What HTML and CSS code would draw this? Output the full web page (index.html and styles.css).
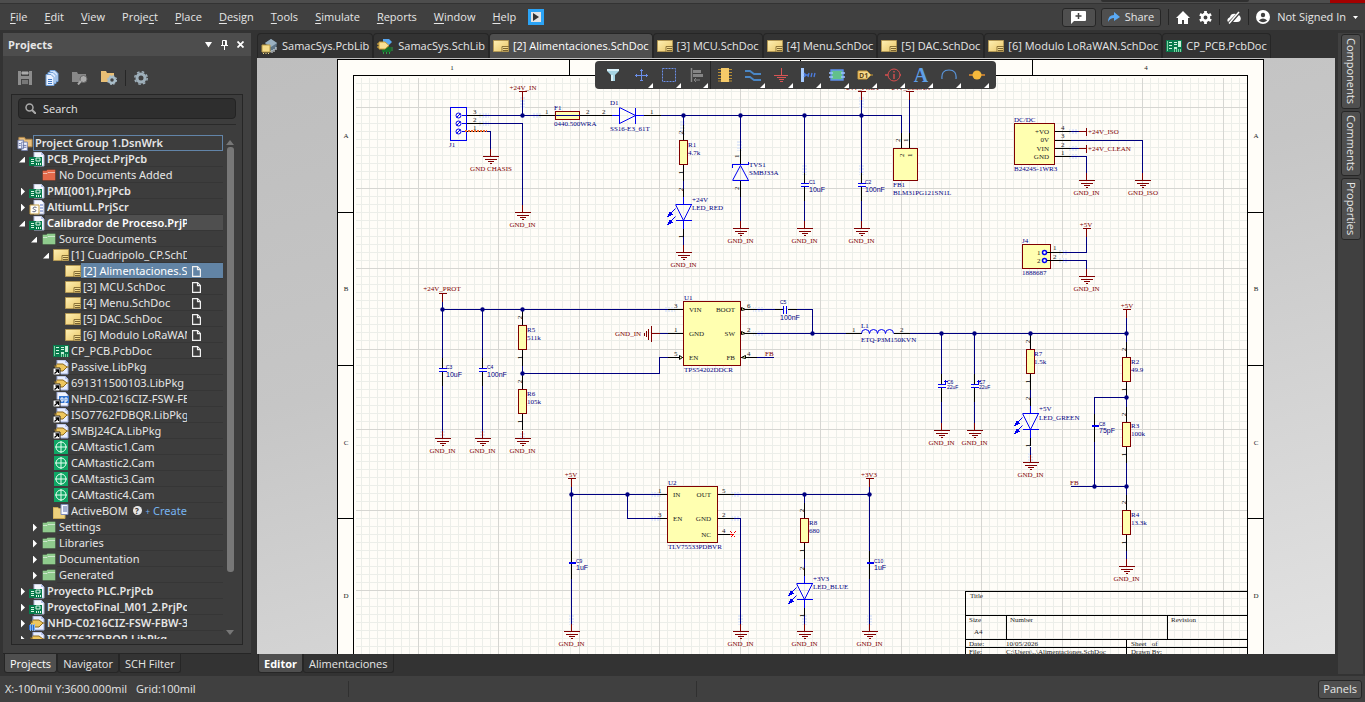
FILE: index.html
```html
<!DOCTYPE html>
<html lang="en">
<head>
<meta charset="utf-8">
<title>[2] Alimentaciones.SchDoc</title>
<link rel="stylesheet" href="styles.css">
</head>
<body>
<svg class="defs" aria-hidden="true">
  <defs>
    <linearGradient id="gold" x1="0" y1="0" x2="1" y2="1"><stop offset="0" stop-color="#fff0b4"/><stop offset="1" stop-color="#e8c566"/></linearGradient>
    <symbol id="i-sch" viewBox="0 0 16 12"><path d="M.5.5h15v11H.5z" fill="url(#gold)" stroke="#b39855"/><path d="M9 12V6.500h7" fill="#f3dc92" stroke="#8d7438"/><path d="M10 8.500h5M10 10.500h5" stroke="#7a6430"/></symbol>
    <symbol id="i-pcb" viewBox="0 0 16 12"><path d="M0 0h16v12H0z" fill="#0a7a4c"/><path d="M3 2.500h3M3 5.500h3M3 8.500h3M8 2.500h3M8 4.500h3" stroke="#d9f5e4"/><path d="M12 1h3v6h-3zM8 7h3v2H8z" fill="#c9efd8"/><path d="M1.500 1v10M8.500 9v3M10.500 9v3M12.500 9v3M14.500 9v3" stroke="#7ed0a2"/></symbol>
    <symbol id="i-prj" viewBox="0 0 16 15"><path d="M5 0h7l3 3v11H5z" fill="#f6f8ff" stroke="#aab4d4"/><path d="M12 0v3h3" fill="#b7c4ea"/><path d="M0 5h13v9H0z" fill="#067a4b"/><path d="M2 7.500h3M2 9.500h3M2 11.500h3M7.500 11v2M9.500 11v2M11.500 11v2" stroke="#d9f5e4"/><path d="M7 6h4v3H7z" fill="none" stroke="#d9f5e4"/></symbol>
    <symbol id="i-group" viewBox="0 0 17 15"><path d="M2 1h6l1 2h7v8H2z" fill="#e9c07c" stroke="#b5894a"/><path d="M1 4h6v9H1zM5 6h6v9H5z" fill="#f1f4ff" stroke="#7480ab"/><path d="M6 9.500h4M6 11.500h4M2 7.500h2M2 9.500h2" stroke="#6573a8"/></symbol>
    <symbol id="i-folder" viewBox="0 0 14 12"><path d="M.5 11.500V1.500h4l1-1h8v11z" fill="currentColor" stroke="#0003"/><path d="M1 4.500h4l1-1h7" fill="none" stroke="#fff8"/></symbol>
    <symbol id="i-scr" viewBox="0 0 16 15"><path d="M5 0h7l3 3v11H5z" fill="#f6f8ff" stroke="#aab4d4"/><path d="M11 5h3M11 8h3M11 11h3" stroke="#5c78c4"/><path d="M1 5h9v9H1z" fill="#fffdf4" stroke="#c39d45"/><path d="M7.500 7.500C4 6 3 9 5.500 9.500s1.500 3-2 2" fill="none" stroke="#5d6480"/></symbol>
    <symbol id="i-lib" viewBox="0 0 16 15"><path d="M4 0h8l3 3v11H4z" fill="#e7edff" stroke="#9aa9d6"/><path d="M12 0v3h3" fill="#b7c4ea"/><path d="M4 4h6l4 3-4 4H4V9H1M4 6H1M14 7h2" fill="#efc75e" stroke="#8d6a1e"/></symbol>
    <symbol id="i-liblink" viewBox="0 0 16 15"><use href="#i-lib" width="16" height="15"/><path d="M0 8h7v7H0z" fill="#fff" stroke="#222"/><path d="M1.500 13.500l3.500-3M2.500 10h3v3" fill="none" stroke="#000" stroke-width="1.300"/></symbol>
    <symbol id="i-libblue" viewBox="0 0 16 15"><use href="#i-lib" width="16" height="15"/><path d="M0 9h6v5H0z" fill="#2c6ccc"/><path d="M1.500 8v7M3.500 8v7M5.500 8v7" stroke="#82b4f0"/></symbol>
    <symbol id="i-dep" viewBox="0 0 16 15"><path d="M4 0h8l3 3v11H4z" fill="#f1f4ff" stroke="#9aa9d6"/><path d="M6 4h10v7H6z" fill="#3577d4"/><path d="M8 9V6h2v3zM12 11V6h2v3h-2" fill="none" stroke="#fff"/><path d="M0 8h7v7H0z" fill="#fff" stroke="#222"/><path d="M1.500 13.500l3.500-3M2.500 10h3v3" fill="none" stroke="#000" stroke-width="1.300"/></symbol>
    <symbol id="i-cam" viewBox="0 0 14 14"><path d="M0 0h14v14H0z" fill="#0fa765"/><circle cx="7" cy="7" r="5" fill="none" stroke="#e7fff1"/><path d="M7 1v12M1 7h12" stroke="#e7fff1"/></symbol>
    <symbol id="i-bom" viewBox="0 0 16 14"><path d="M0 3h5l1 1h6v10H0z" fill="#edd07c" stroke="#c5a450"/><path d="M8 0h7v10H8z" fill="#f6f8ff" stroke="#7f8cba"/><path d="M10 2.500h4M10 4.500h4M10 6.500h4" stroke="#5566a4"/></symbol>
    <symbol id="i-doc" viewBox="0 0 9 11"><path d="M.6.6h5l2.800 2.800v7H.6zM5.500.6v3h3" fill="none" stroke="#f0f0f0" stroke-width="1.200"/></symbol>
  </defs>
</svg>

<div class="caption"><span class="caption-box"></span><span class="caption-close"></span></div>
<header class="menubar">
  <nav class="menus">
    <button><u>F</u>ile</button><button><u>E</u>dit</button><button><u>V</u>iew</button><button>Proje<u>c</u>t</button><button><u>P</u>lace</button><button><u>D</u>esign</button><button><u>T</u>ools</button><button><u>S</u>imulate</button><button><u>R</u>eports</button><button><u>W</u>indow</button><button><u>H</u>elp</button>
    <button class="run" aria-label="Run"><svg width="16" height="16" viewBox="0 0 16 16"><path d="M0 0h16v16H0z" fill="#2ba3f5"/><path d="M3 3h10v10H3z" fill="#e3e3e3"/><path d="M5 4l6 4-6 4z" fill="#333"/></svg></button>
  </nav>
  <div class="account">
    <button class="boxed comment" aria-label="Add comment"><svg width="17" height="14" viewBox="0 0 17 14"><path d="M2 1h13q1 0 1 1v8q0 1-1 1H4l-3 3V2q0-1 1-1z" fill="#fff"/><path d="M8.500 3v6M5.500 6h6" stroke="#444" stroke-width="1.500"/></svg></button>
    <button class="boxed"><svg width="12" height="10" viewBox="0 0 12 10"><path d="M0 10q0-7 6-7V0l6 5-6 4V6Q2 6 0 10z" fill="#5aa9f4"/></svg>Share</button>
    <i class="bar"></i>
    <button aria-label="Home"><svg width="14" height="13" viewBox="0 0 14 13"><path d="M7 0l7 7h-2v6H8V9H6v4H2V7H0z" fill="#fff"/></svg></button>
    <button aria-label="Settings"><svg width="13" height="13" viewBox="0 0 14 14"><circle cx="7" cy="7" r="3.600" fill="none" stroke="#fff" stroke-width="3"/><path d="M7 0v3M7 11v3M1 3.500l2.500 1.500M10.500 9l2.500 1.500M1 10.500L3.500 9M10.500 5L13 3.500" stroke="#fff" stroke-width="3"/></svg></button>
    <i class="bar"></i>
    <button aria-label="Offline"><svg width="14" height="13" viewBox="0 0 14 13"><path d="M1 11q-2-3 2-5 1-4 6-3zM6 11l6-7q3 3 1 6-1 1-3 1z" fill="#fff"/><path d="M2 12.500L12 1" stroke="#fff" stroke-width="1.500"/></svg></button>
    <i class="bar"></i>
    <button class="user"><svg width="14" height="14" viewBox="0 0 14 14"><circle cx="7" cy="7" r="7" fill="#fff"/><circle cx="7" cy="5" r="2.200" fill="#404040"/><path d="M2.800 10.500Q7 6.500 11.200 10.500 7 14 2.800 10.500z" fill="#404040"/></svg>Not Signed In<svg width="5" height="3" viewBox="0 0 5 3"><path d="M0 0h5L2.500 3z" fill="#fff"/></svg></button>
  </div>
</header>

<main class="work">
  <aside class="side">
    <section class="panel">
      <header class="panel-head"><h2>Projects</h2>
        <button aria-label="Menu"><svg width="7" height="6" viewBox="0 0 7 6"><path d="M0 0h7L3.500 5.500z" fill="#fff"/></svg></button>
        <button aria-label="Pin"><svg width="7" height="10" viewBox="0 0 7 10"><path d="M1.500 5V.5h4V5M0 5.500h7M3.500 6v4M4.500 1v4" fill="none" stroke="#fff"/></svg></button>
        <button aria-label="Close"><svg width="7" height="7" viewBox="0 0 7 7"><path d="M.5.5l6 6M6.500.5l-6 6" stroke="#fff" stroke-width="1.800"/></svg></button>
      </header>
      <div class="tools">
        <button aria-label="Save"><svg width="14" height="14" viewBox="0 0 14 14"><path d="M0 0h14v14H0z" fill="#8d8d8d"/><path d="M3 0h8v5H3zM3 8h8v6H3z" fill="#444"/><path d="M4 1h6v2H4zM4 10h6M4 12h6" fill="#aaa" stroke="#aaa"/></svg></button>
        <button aria-label="Compile"><svg width="14" height="16" viewBox="0 0 14 16"><path d="M5 .5h5l3 3v8H5z" fill="#cfe2fb" stroke="#6f9fd8"/><path d="M3 2.500h5l3 3v8H3z" fill="#d9e8fc" stroke="#6f9fd8"/><path d="M1 4.500h5l3 3v8H1z" fill="#e8f1ff" stroke="#6f9fd8"/><path d="M3 9.500h4M3 11.500h4M3 13.500h4" stroke="#4179c4"/></svg></button>
        <button aria-label="Search folder"><svg width="16" height="14" viewBox="0 0 16 14"><path d="M0 1h5l1 2h8v8H0z" fill="#888"/><circle cx="11.500" cy="8" r="3.500" fill="#aaa" stroke="#666"/><path d="M9 10l-3 3.500" stroke="#aaa" stroke-width="2"/></svg></button>
        <button aria-label="Folder options"><svg width="16" height="15" viewBox="0 0 16 15"><path d="M0 1h5l1 2h7v9H0z" fill="#e9bf75"/><circle cx="11" cy="10" r="3" fill="#444" stroke="#a9bdc9" stroke-width="2.500"/><circle cx="11" cy="10" r="4.600" fill="none" stroke="#a9bdc9" stroke-dasharray="2 1.600"/></svg></button>
        <i class="bar"></i>
        <button aria-label="Options"><svg width="14" height="14" viewBox="0 0 14 14"><circle cx="7" cy="7" r="4" fill="none" stroke="#9fb0bb" stroke-width="3"/><circle cx="7" cy="7" r="6.200" fill="none" stroke="#9fb0bb" stroke-width="1.500" stroke-dasharray="2.600 2.270"/></svg></button>
      </div>
      <div class="explorer">
        <label class="search"><svg width="11" height="11" viewBox="0 0 11 11"><circle cx="4.500" cy="4.500" r="3.500" fill="none" stroke="#aaa" stroke-width="1.500"/><path d="M7 7l4 4" stroke="#aaa" stroke-width="2"/></svg><input type="text" placeholder="Search" aria-label="Search"></label>
        <hr>
        <div class="scroller">
          <ul class="tree">
            <li class="root"><svg class="ic"><use href="#i-group"/></svg><div class="cell focus"><b>Project Group 1.DsnWrk</b></div></li>
            <li class="l1 open"><i class="tw"></i><svg class="ic"><use href="#i-prj"/></svg><div class="cell"><b>PCB_Project.PrjPcb</b></div></li>
            <li class="l2"><i class="tw"></i><svg class="ic sm red"><use href="#i-folder"/></svg><div class="cell"><span>No Documents Added</span></div></li>
            <li class="l1 shut"><i class="tw"></i><svg class="ic"><use href="#i-prj"/></svg><div class="cell"><b>PMI(001).PrjPcb</b></div></li>
            <li class="l1 shut"><i class="tw"></i><svg class="ic"><use href="#i-scr"/></svg><div class="cell"><b>AltiumLL.PrjScr</b></div></li>
            <li class="l1 open"><i class="tw"></i><svg class="ic"><use href="#i-prj"/></svg><div class="cell current"><b>Calibrador de Proceso.PrjPcb</b></div></li>
            <li class="l2 open"><i class="tw"></i><svg class="ic sm green"><use href="#i-folder"/></svg><div class="cell"><span>Source Documents</span></div></li>
            <li class="l3 open"><i class="tw"></i><svg class="ic sm"><use href="#i-sch"/></svg><div class="cell"><span>[1] Cuadripolo_CP.SchDoc</span></div></li>
            <li class="l4"><i class="tw"></i><svg class="ic sm"><use href="#i-sch"/></svg><div class="cell picked"><span>[2] Alimentaciones.SchDoc</span><svg class="st"><use href="#i-doc"/></svg></div></li>
            <li class="l4"><i class="tw"></i><svg class="ic sm"><use href="#i-sch"/></svg><div class="cell"><span>[3] MCU.SchDoc</span><svg class="st"><use href="#i-doc"/></svg></div></li>
            <li class="l4"><i class="tw"></i><svg class="ic sm"><use href="#i-sch"/></svg><div class="cell"><span>[4] Menu.SchDoc</span><svg class="st"><use href="#i-doc"/></svg></div></li>
            <li class="l4"><i class="tw"></i><svg class="ic sm"><use href="#i-sch"/></svg><div class="cell"><span>[5] DAC.SchDoc</span><svg class="st"><use href="#i-doc"/></svg></div></li>
            <li class="l4"><i class="tw"></i><svg class="ic sm"><use href="#i-sch"/></svg><div class="cell"><span>[6] Modulo LoRaWAN.SchDoc</span><svg class="st"><use href="#i-doc"/></svg></div></li>
            <li class="l3"><i class="tw"></i><svg class="ic sm"><use href="#i-pcb"/></svg><div class="cell"><span>CP_PCB.PcbDoc</span><svg class="st"><use href="#i-doc"/></svg></div></li>
            <li class="l3"><i class="tw"></i><svg class="ic"><use href="#i-liblink"/></svg><div class="cell"><span>Passive.LibPkg</span></div></li>
            <li class="l3"><i class="tw"></i><svg class="ic"><use href="#i-liblink"/></svg><div class="cell"><span>691311500103.LibPkg</span></div></li>
            <li class="l3"><i class="tw"></i><svg class="ic"><use href="#i-dep"/></svg><div class="cell"><span>NHD-C0216CIZ-FSW-FBW-3V3</span></div></li>
            <li class="l3"><i class="tw"></i><svg class="ic"><use href="#i-liblink"/></svg><div class="cell"><span>ISO7762FDBQR.LibPkg</span></div></li>
            <li class="l3"><i class="tw"></i><svg class="ic"><use href="#i-liblink"/></svg><div class="cell"><span>SMBJ24CA.LibPkg</span></div></li>
            <li class="l3"><i class="tw"></i><svg class="ic cam"><use href="#i-cam"/></svg><div class="cell"><span>CAMtastic1.Cam</span></div></li>
            <li class="l3"><i class="tw"></i><svg class="ic cam"><use href="#i-cam"/></svg><div class="cell"><span>CAMtastic2.Cam</span></div></li>
            <li class="l3"><i class="tw"></i><svg class="ic cam"><use href="#i-cam"/></svg><div class="cell"><span>CAMtastic3.Cam</span></div></li>
            <li class="l3"><i class="tw"></i><svg class="ic cam"><use href="#i-cam"/></svg><div class="cell"><span>CAMtastic4.Cam</span></div></li>
            <li class="l3"><i class="tw"></i><svg class="ic"><use href="#i-bom"/></svg><div class="cell bom"><span>ActiveBOM <em>?</em><small>+</small><a href="#create">Create</a></span></div></li>
            <li class="l2 shut"><i class="tw"></i><svg class="ic sm green"><use href="#i-folder"/></svg><div class="cell"><span>Settings</span></div></li>
            <li class="l2 shut"><i class="tw"></i><svg class="ic sm green"><use href="#i-folder"/></svg><div class="cell"><span>Libraries</span></div></li>
            <li class="l2 shut"><i class="tw"></i><svg class="ic sm green"><use href="#i-folder"/></svg><div class="cell"><span>Documentation</span></div></li>
            <li class="l2 shut"><i class="tw"></i><svg class="ic sm green"><use href="#i-folder"/></svg><div class="cell"><span>Generated</span></div></li>
            <li class="l1 shut"><i class="tw"></i><svg class="ic"><use href="#i-prj"/></svg><div class="cell"><b>Proyecto PLC.PrjPcb</b></div></li>
            <li class="l1 shut"><i class="tw"></i><svg class="ic"><use href="#i-prj"/></svg><div class="cell"><b>ProyectoFinal_M01_2.PrjPcb</b></div></li>
            <li class="l1 shut"><i class="tw"></i><svg class="ic"><use href="#i-libblue"/></svg><div class="cell"><b>NHD-C0216CIZ-FSW-FBW-3V3</b></div></li>
            <li class="l1 shut"><i class="tw"></i><svg class="ic"><use href="#i-libblue"/></svg><div class="cell"><b>ISO7762FDBQR.LibPkg</b></div></li>
          </ul>
          <div class="scrollbar"><svg width="8" height="5" viewBox="0 0 8 5"><path d="M0 5h8L4 0z" fill="#777"/></svg><div class="thumb"></div><svg width="8" height="5" viewBox="0 0 8 5"><path d="M0 0h8L4 5z" fill="#777"/></svg></div>
        </div>
      </div>
    </section>
    <nav class="bottom-tabs"><button class="on">Projects</button><button>Navigator</button><button>SCH Filter</button></nav>
  </aside>

  <section class="editor">
    <nav class="doc-tabs">
      <button><svg width="17" height="15" viewBox="0 0 17 15"><path d="M4 4l6-4 6 4-1 6-5 3z" fill="#5d7487"/><path d="M4 4l6-4 6 4-6 4z" fill="#9ab0c0"/><path d="M8 12l2 1M11 11v3M13 10v3M15 8v3" stroke="#e8eef2"/><path d="M1 6h8v7H1z" fill="#f5dc8a" stroke="#b99a46"/><path d="M2.500 14v1M5 14v1M7.500 14v1" stroke="#f5dc8a"/></svg>SamacSys.PcbLib</button>
      <button><svg width="17" height="16" viewBox="0 0 17 16"><path d="M6 1h6l3 3-3 3H6z" fill="#58a6f0"/><path d="M5 9h9v5H5z" fill="#146d2b"/><path d="M6.500 14v2M9.500 14v2M12.500 14v2M14 10h2M14 12h2" stroke="#2f9c48"/><path d="M2 4h6l4 3.500L8 11H2z" fill="#f8df93" stroke="#c89d39"/><path d="M0 6h2M0 9h2" stroke="#e8b840"/></svg>SamacSys.SchLib</button>
      <button class="on"><svg width="16" height="12"><use href="#i-sch"/></svg>[2] Alimentaciones.SchDoc</button>
      <button><svg width="16" height="12"><use href="#i-sch"/></svg>[3] MCU.SchDoc</button>
      <button><svg width="16" height="12"><use href="#i-sch"/></svg>[4] Menu.SchDoc</button>
      <button><svg width="16" height="12"><use href="#i-sch"/></svg>[5] DAC.SchDoc</button>
      <button><svg width="16" height="12"><use href="#i-sch"/></svg>[6] Modulo LoRaWAN.SchDoc</button>
      <button><svg width="16" height="12"><use href="#i-pcb"/></svg>CP_PCB.PcbDoc</button>
    </nav>
    <div class="canvas">
      <svg class="sheet" role="img" aria-label="Schematic sheet">
        <defs>
          <pattern id="grid" x="417.500" y="187.500" width="161" height="161" patternUnits="userSpaceOnUse">
            <path class="minor" d="M8.500 0V161M16.500 0V161M24.500 0V161M32.500 0V161M40.500 0V161M48.500 0V161M56.500 0V161M64.500 0V161M72.500 0V161M88.500 0V161M96.500 0V161M104.500 0V161M112.500 0V161M120.500 0V161M128.500 0V161M136.500 0V161M144.500 0V161M152.500 0V161M0 8.500H161M0 16.500H161M0 24.500H161M0 32.500H161M0 40.500H161M0 48.500H161M0 56.500H161M0 64.500H161M0 72.500H161M0 88.500H161M0 96.500H161M0 104.500H161M0 112.500H161M0 120.500H161M0 128.500H161M0 136.500H161M0 144.500H161M0 152.500H161"/>
            <path class="major" d="M.5 0V161M80.500 0V161M0 .5H161M0 80.500H161"/>
          </pattern>
          <g id="earth"><path class="pw" d="M0-8V0M-8 0H8M-6 3H6M-3 5H3M-1 7H1"/></g>
          <g id="gnd"><use href="#earth"/><text class="net mid" x="0" y="14">GND_IN</text></g>
          <g id="vcc"><path class="pw" d="M0 8V0M-4 0H4"/></g>
          <g id="res"><path class="pin" d="M0-16V0M0 24V40"/><path class="part" d="M-4 0H4V24H-4z"/><text class="num mid" transform="translate(-1 -8) rotate(-90)">2</text><text class="num mid" transform="translate(-1 32) rotate(-90)">1</text></g>
          <g id="cap"><path class="pin" d="M0-12V-1M0 2V16"/><path class="sym" d="M-4-1H4M-4 2H4"/></g>
          <g id="cap1"><path class="pin" d="M0-12V0M0 1V16"/><path class="sym" d="M-3 0H4M-3 1H4"/></g>
          <g id="led"><path class="pin" d="M0-16V-8M0 24V32"/><path class="sym" d="M0-8V0M0 16V24M-8 0H8M-8 16H8"/><path class="sym soft" d="M-8 0L0 16 8 0M-8 4L-13 9M-8 12L-13 17"/><path class="tip" d="M-17 13l3-6 3 3zM-17 21l3-6 3 3z"/><text class="num mid" transform="translate(-1 -15) rotate(-90)">2</text><text class="num mid" transform="translate(-1 32) rotate(-90)">1</text></g>
          <circle id="dot" class="dot" r="2.200"/>
          <g id="screw"><circle class="sym soft" r="2.500"/><path class="sym soft" d="M-2 2L2-2"/></g>
        </defs>
        <g transform="translate(-256.500 -57.500)">
          <path class="paper" d="M337 59H1263V700H337z"/>
          <path fill="url(#grid)" d="M355 77H1246V700H355z"/>
          <path class="frame" d="M337 700V59H1263V700M353 700V75H1247V700M569 59V75M800 59V75M1032 59V75M337 212H353M337 365H353M337 518H353M1247 212H1263M1247 365H1263M1247 518H1263"/>
          <path class="frame" d="M1247 591H965V700M965 615H1247M965 639H1247M965 647H1247M1006 615V639M1167 615V639M1126 639V700"/>

          <path class="mask" d="M682 120V134M739 140V150M804 164V174M861 164V174M522 432V440M442 430V438M482 430V438M1030 452V460M522 96V108M861 96V108M740 614V624M804 614V624M571 614V624M869 614V624M478 115H488M478 123H488M1068 131H1076M1068 148H1076M1068 156H1076M1058 252H1066M1058 260H1066M540 115H532M762 309H752M762 333H752M664 309H674M730 494H740M730 518H740M650 494H660M650 518H660"/>
          <path class="wire" d="M482 115H538M595 115H603M660 115H901V132M522 99V115M482 123H522V204M482 131H490V148M683 115V124M683 180V188M683 236V244M740 115V148M740 196V220M804 115V172M804 198V220M861 99V172M861 198V220M909 99V132
            M1070 131H1078M1070 140H1142V172M1070 148H1078M1070 156H1086V172M1062 252H1086V236M1062 260H1086V268
            M442 301V309H667M442 309V358M442 384V430M482 309V358M482 384V430M522 365V373H659V357H667M659 333H667M756 309H774M796 309H812V333M756 333H845M756 357H773
            M909 333H1126M941 333V374M941 400V422M974 333V374M974 400V422M1030 389V397M1030 446V454M1126 317V341M1126 397H1094V414M1126 397V406M1094 438V486M1126 462V486M1070 486H1126V494M1126 550V558
            M571 486V494H659M571 494V551M571 577V623M627 494V518H659M733 494H869M733 518H740V623M804 494V502M804 558V567M804 615V623M869 486V551M869 577V623"/>
          <path class="pin" d="M466 115H482M466 123H482M466 131H482M538 115H555M579 115H611M643 115H660M740 148V164M740 180V196M901 132V148M909 132V148M1054 131H1070M1054 140H1070M1054 148H1070M1054 156H1070M1046 252H1062M1046 260H1062
            M667 309H683M667 333H683M667 357H683M740 309H756M740 333H756M740 357H756M774 309H782M787 309H796M845 333H861M893 333H909M659 494H667M659 518H667M717 494H733M717 518H733M717 534H732"/>

          <path class="sym" d="M450 107H466V140H450zM461 115H466M461 123H466M461 131H466"/>
          <use href="#screw" x="458" y="115"/><use href="#screw" x="458" y="123"/><use href="#screw" x="458" y="131"/>
          <path class="warn" d="M464 130H486"/>
          <path class="part" d="M555 111H579V119H555zM893 148H917V180H893zM1014 123H1054V164H1014zM1022 244H1050V268H1022zM683 301H740V365H683zM667 486H717V542H667z"/>
          <path class="wire" d="M555 115H579"/>
          <path class="pin" d="M1046 252H1050M1046 260H1050"/>
          <path class="sym" d="M611 115H619M635 115H643M635 107V123M619 107V123"/><path class="sym soft" d="M619 107L635 115 619 123"/>
          <path class="sym" d="M732 167V164H748V161M732 180H748"/><path class="sym soft" d="M732 180L740 165 748 180"/>
          <circle class="ring" cx="1044" cy="252" r="2"/><circle class="ring" cx="1044" cy="260" r="2"/>
          <path class="tri" d="M741 307L745 309 741 310zM741 331L745 333 741 334zM745 355L741 357 745 358zM679 355L682 357 679 359z"/>
          <path class="sym" d="M783 305V313M786 305V313"/>
          <path class="sym soft" d="M861 333q0-4 4-4t4 4q0-4 4-4t4 4q0-4 4-4t4 4q0-4 4-4t4 4"/>
          <path class="pw" d="M1078 131H1086M1086 127V135M1078 148H1086M1086 144V152M651 333H659M651 325V341M648 328V339M646 330V336M644 332V335"/>
          <path class="nc" d="M730 531L735 537M735 531L730 537M729 534H733"/>

          <use href="#res" x="683" y="140"/><use href="#led" x="683" y="204"/>
          <use href="#res" x="522" y="325"/><use href="#res" x="522" y="389"/>
          <use href="#res" x="1030" y="349"/><use href="#led" x="1030" y="413"/>
          <use href="#res" x="1126" y="357"/><use href="#res" x="1126" y="422"/><use href="#res" x="1126" y="510"/>
          <use href="#res" x="804" y="518"/><use href="#led" x="804" y="583"/>
          <use href="#cap" x="804" y="184"/><use href="#cap" x="861" y="184"/><use href="#cap" x="442" y="369"/><use href="#cap" x="482" y="369"/><use href="#cap" x="941" y="385"/><use href="#cap" x="974" y="385"/>
          <use href="#cap1" x="1094" y="425"/><use href="#cap1" x="571" y="562"/><use href="#cap1" x="869" y="562"/>
          <path class="sym" d="M943 381H947M945 379V383M976 381H980M978 379V383"/>

          <use href="#earth" x="490" y="156"/><use href="#earth" x="1142" y="180"/>
          <use href="#gnd" x="522" y="212"/><use href="#gnd" x="683" y="252"/><use href="#gnd" x="740" y="228"/><use href="#gnd" x="804" y="228"/><use href="#gnd" x="861" y="228"/><use href="#gnd" x="1086" y="180"/><use href="#gnd" x="1086" y="276"/><use href="#gnd" x="442" y="438"/><use href="#gnd" x="482" y="438"/><use href="#gnd" x="522" y="438"/><use href="#gnd" x="941" y="430"/><use href="#gnd" x="974" y="430"/><use href="#gnd" x="1030" y="462"/><use href="#gnd" x="1126" y="566"/><use href="#gnd" x="571" y="631"/><use href="#gnd" x="740" y="631"/><use href="#gnd" x="804" y="631"/><use href="#gnd" x="869" y="631"/>
          <use href="#vcc" x="522" y="91"/><use href="#vcc" x="861" y="91"/><use href="#vcc" x="909" y="91"/><use href="#vcc" x="1086" y="228"/><use href="#vcc" x="442" y="293"/><use href="#vcc" x="1126" y="309"/><use href="#vcc" x="571" y="478"/><use href="#vcc" x="869" y="478"/>

          <use href="#dot" x="522" y="115"/><use href="#dot" x="683" y="115"/><use href="#dot" x="740" y="115"/><use href="#dot" x="804" y="115"/><use href="#dot" x="861" y="115"/><use href="#dot" x="442" y="309"/><use href="#dot" x="482" y="309"/><use href="#dot" x="522" y="309"/><use href="#dot" x="522" y="373"/><use href="#dot" x="812" y="333"/><use href="#dot" x="941" y="333"/><use href="#dot" x="974" y="333"/><use href="#dot" x="1030" y="333"/><use href="#dot" x="1126" y="333"/><use href="#dot" x="1126" y="397"/><use href="#dot" x="1126" y="486"/><use href="#dot" x="1094" y="486"/><use href="#dot" x="571" y="494"/><use href="#dot" x="627" y="494"/><use href="#dot" x="804" y="494"/><use href="#dot" x="869" y="494"/>
        </g>
        <g transform="translate(-257 -58)">
          <g class="ink mid"><text x="452" y="70">1</text><text x="1146" y="70">4</text><text x="346" y="138">A</text><text x="346" y="291">B</text><text x="346" y="445">C</text><text x="346" y="598">D</text><text x="1256" y="138">A</text><text x="1256" y="291">B</text><text x="1256" y="445">C</text><text x="1256" y="598">D</text></g>
          <g class="ink"><text x="970" y="598">Title</text><text x="969" y="622">Size</text><text x="1010" y="622">Number</text><text x="1171" y="622">Revision</text><text x="974" y="634">A4</text><text x="969" y="646">Date:</text><text x="1006" y="646">10/05/2026</text><text x="1131" y="646">Sheet&#160;&#160; of</text><text x="969" y="654">File:</text><text x="1006" y="654">C:\Users\..\Alimentaciones.SchDoc</text><text x="1131" y="654">Drawn By:</text></g>
          <g class="net mid"><text x="491" y="171">GND CHASIS</text><text x="1143" y="195">GND_ISO</text><text x="523" y="90">+24V_IN</text><text x="861" y="90">+24V_PROT</text><text x="909" y="90">+24V_CLEAN</text><text x="1086" y="227">+5V</text><text x="442" y="291">+24V_PROT</text><text x="1127" y="308">+5V</text><text x="571" y="477">+5V</text><text x="869" y="477">+3V3</text></g>
          <g class="net"><text x="1088" y="134">+24V_ISO</text><text x="1088" y="151">+24V_CLEAN</text><text x="615" y="336">GND_IN</text><text x="765" y="356">FB</text><text x="1070" y="485">FB</text></g>
          <g class="lab"><text x="449" y="147">J1</text><text x="554" y="110">F1</text><text x="554" y="126">0440.500WRA</text><text x="610" y="105">D1</text><text x="610" y="131">SS16-E3_61T</text><text x="688" y="147">R1</text><text x="688" y="155">4.7k</text><text x="692" y="202">+24V</text><text x="692" y="210">LED_RED</text><text x="749" y="167">TVS1</text><text x="749" y="175">SMBJ33A</text><text x="893" y="187">FB1</text><text x="893" y="195">BLM31PG121SN1L</text><text x="1014" y="122">DC/DC</text><text x="1014" y="171">B2424S-1WR3</text><text x="1022" y="243">J4</text><text x="1022" y="275">1888687</text><text x="527" y="332">R5</text><text x="527" y="340">511k</text><text x="527" y="396">R6</text><text x="527" y="404">105k</text><text x="684" y="300">U1</text><text x="684" y="372">TPS54202DDCR</text><text x="861" y="328">L1</text><text x="861" y="342">ETQ-P3M150KVN</text><text x="1034" y="356">R7</text><text x="1034" y="364">1.5k</text><text x="1039" y="411">+5V</text><text x="1039" y="420">LED_GREEN</text><text x="1131" y="364">R2</text><text x="1131" y="372">49.9</text><text x="1131" y="428">R3</text><text x="1131" y="436">100k</text><text x="1131" y="517">R4</text><text x="1131" y="525">13.3k</text><text x="668" y="485">U2</text><text x="668" y="549">TLV75533PDBVR</text><text x="809" y="525">R8</text><text x="809" y="533">680</text><text x="813" y="581">+3V3</text><text x="813" y="589">LED_BLUE</text></g>
          <g class="val"><text x="809" y="192">10uF</text><text x="865" y="192">100nF</text><text x="446" y="377">10uF</text><text x="487" y="377">100nF</text><text x="780" y="320">100nF</text><text x="1099" y="433">75pF</text><text x="576" y="570">1uF</text><text x="874" y="570">1uF</text></g>
          <g class="val tiny"><text x="809" y="184">C1</text><text x="865" y="184">C2</text><text x="446" y="369">C3</text><text x="487" y="369">C4</text><text x="780" y="304">C5</text><text x="947" y="384">C6</text><text x="947" y="389">22uF</text><text x="979" y="384">C7</text><text x="979" y="389">22uF</text><text x="1099" y="426">C8</text><text x="576" y="563">C9</text><text x="874" y="563">C10</text></g>
          <g class="num"><text x="473" y="114">3</text><text x="473" y="122">2</text><text x="473" y="130">1</text><text x="545" y="114">1</text><text x="586" y="114">2</text><text x="602" y="114">2</text><text x="650" y="114">1</text><text x="1061" y="130">4</text><text x="1061" y="138">3</text><text x="1061" y="147">2</text><text x="1061" y="155">1</text><text x="1053" y="250">1</text><text x="1053" y="259">2</text><text x="1037" y="255">1</text><text x="1037" y="263">2</text><text x="674" y="308">3</text><text x="674" y="332">1</text><text x="674" y="356">5</text><text x="747" y="308">6</text><text x="747" y="332">2</text><text x="747" y="356">4</text><text x="852" y="332">1</text><text x="900" y="332">2</text><text x="658" y="493">1</text><text x="658" y="517">3</text><text x="722" y="493">5</text><text x="722" y="517">2</text><text x="722" y="533">4</text>
            <text transform="translate(739 158) rotate(-90)">1</text><text transform="translate(739 190) rotate(-90)">2</text><text transform="translate(900 142) rotate(-90)">2</text><text transform="translate(908 142) rotate(-90)">1</text><text transform="translate(904 157) rotate(-90)">2</text><text transform="translate(912 157) rotate(-90)">1</text></g>
          <g class="ink"><text x="689" y="312">VIN</text><text x="689" y="336">GND</text><text x="689" y="360">EN</text><text x="673" y="497">IN</text><text x="673" y="521">EN</text></g>
          <g class="ink end"><text x="1049" y="134">+VO</text><text x="1049" y="142">0V</text><text x="1049" y="151">VIN</text><text x="1049" y="159">GND</text><text x="735" y="312">BOOT</text><text x="735" y="336">SW</text><text x="735" y="360">FB</text><text x="711" y="497">OUT</text><text x="711" y="521">GND</text><text x="711" y="537">NC</text></g>
        </g>
      </svg>
      <div class="active-bar">
        <button aria-label="Filter"><svg width="14" height="14" viewBox="0 0 14 14"><path d="M1 1h12v2L9 7v6H5V7L1 3z" fill="#a5d3e2"/><path d="M1 1h12v2H1zM5 7h2v6H5z" fill="#d8eff6"/></svg></button>
        <button class="more" aria-label="Move"><svg width="14" height="14" viewBox="0 0 14 14"><path d="M7.500 1v12M1 7.500h13M6 2.500h3M6 12.500h3M2.500 6v3M12.500 6v3" fill="none" stroke="#6b8fe8"/></svg></button>
        <button class="more" aria-label="Select"><svg width="14" height="14" viewBox="0 0 14 14"><path d="M.5.5h13v13H.5z" fill="none" stroke="#6b8fe8" stroke-dasharray="2 1"/></svg></button>
        <button class="more ruled" aria-label="Align"><svg width="14" height="14" viewBox="0 0 14 14"><path d="M1.500 0v14" stroke="#888" stroke-width="1.500"/><path d="M3 2h8v3H3zM3 6h10v3H3z" fill="#858585"/><path d="M4 12h6M6 10l-2 2 2 2" fill="none" stroke="#858585"/></svg></button>
        <button aria-label="Part"><svg width="14" height="14" viewBox="0 0 14 14"><path d="M3 0h8v14H3z" fill="#f5ca69"/><path d="M0 1.500h3M0 4.500h3M0 7.500h3M0 10.500h3M0 13h3M11 1.500h3M11 4.500h3M11 7.500h3M11 10.500h3M11 13h3" stroke="#b98f35"/></svg></button>
        <button class="more" aria-label="Wire"><svg width="16" height="12" viewBox="0 0 16 12"><path d="M0 2h5l4 3h7M0 8h5l4 3h7" fill="none" stroke="#4a86c4" stroke-width="1.800"/></svg></button>
        <button class="more" aria-label="Ground"><svg width="14" height="14" viewBox="0 0 14 14"><path d="M7.500 0v7M0 7.500h14M3 9.500h9M5 11.500h5M6 13.500h3" stroke="#d95555"/></svg></button>
        <button class="more" aria-label="Harness"><svg width="16" height="14" viewBox="0 0 16 14"><path d="M0 0h3v14H0z" fill="#a9ccff"/><path d="M3 7h4M3 5l2 2-2 2M7 9l1-4M10 9l1-4M13 9l1-4" fill="none" stroke="#4c7de0" stroke-width="1.300"/></svg></button>
        <button class="more" aria-label="Sheet symbol"><svg width="16" height="12" viewBox="0 0 16 12"><path d="M2 1h12v10H2z" fill="#62c08c" stroke="#5d90ee" stroke-width="1.400"/><path d="M0 4h4M0 8h4M12 4h4M12 8h4" stroke="#9fc4ff" stroke-width="1.500"/></svg></button>
        <button class="more" aria-label="Port"><svg width="16" height="10" viewBox="0 0 16 10"><path d="M1 1h9l4 4-4 4H1zM14 5h2" fill="#f7d98d" stroke="#c69a3a"/><text x="2" y="8" class="port">D1</text></svg></button>
        <button class="more" aria-label="Directive"><svg width="16" height="14" viewBox="0 0 16 14"><circle cx="9" cy="7" r="6" fill="none" stroke="#d84f4f"/><path d="M0 7h3M9 6v5M9 3v1.500M15 7h1" stroke="#d84f4f" stroke-width="1.400"/></svg></button>
        <button class="more letter" aria-label="Text">A</button>
        <button class="more" aria-label="Arc"><svg width="16" height="14" viewBox="0 0 16 14"><path d="M1 11Q0 2 8 2t7 9" fill="none" stroke="#5a96dc" stroke-width="1.200"/></svg></button>
        <button class="more" aria-label="Junction"><svg width="16" height="12" viewBox="0 0 16 12"><path d="M0 6h16" stroke="#d98a33" stroke-width="1.600"/><circle cx="8" cy="6" r="4.500" fill="#f5b93c"/></svg></button>
      </div>
    </div>
    <nav class="bottom-tabs"><button class="on"><b>Editor</b></button><button>Alimentaciones</button></nav>
  </section>

  <nav class="dock"><button>Components</button><button>Comments</button><button>Properties</button></nav>
</main>

<footer class="status"><span class="cells"><span>X:-100mil Y:3600.000mil</span><span>Grid:100mil</span></span><span class="cells"></span><span class="cells rest"></span><button class="boxed">Panels</button></footer>
</body>
</html>
```
FILE: styles.css
```css
* { box-sizing: border-box; }
html, body { height: 100%; }
body {
  margin: 0;
  display: flex;
  flex-direction: column;
  overflow: hidden;
  background: #333;
  color: #e6e6e6;
  font: 11px/16px "Open Sans", "Noto Sans", sans-serif;
}
button {
  margin: 0; padding: 0; border: 0; background: none; color: inherit; font: inherit;
  display: flex; align-items: center; white-space: nowrap;
}
svg { display: block; flex: none; }
.defs { position: absolute; width: 0; height: 0; }
.bar { width: 1px; height: 16px; background: #262626; }

.caption { height: 4px; background: #4d4d4d; border-bottom: 1px solid #333; display: flex; justify-content: flex-end; }
.caption-box { width: 148px; height: 2px; background: #303030; margin-right: 81px; border-radius: 0 0 3px 3px; }
.caption-close { width: 35px; height: 3px; background: #a40000; }

.menubar { height: 26px; background: #404040; display: flex; justify-content: space-between; align-items: center; flex: none; }
.menus { display: flex; align-items: center; gap: 17px; padding-left: 10px; }
.menus button { display: block; }
.menus u { text-underline-offset: 2px; }
.menus .run { margin-left: -5px; }
.account { display: flex; align-items: center; gap: 9px; padding-right: 7px; }
.account .bar { margin: 0 -2px; }
.boxed { height: 19px; padding: 0 6px; gap: 5px; background: #4f4f4f; border: 1px solid #262626; border-radius: 3px; }
.comment { width: 34px; justify-content: center; margin-right: -4px; }
.user { gap: 7px; }

.work { flex: 1; min-height: 0; display: flex; padding-top: 3px; }

.side { width: 257px; flex: none; padding-left: 3px; display: flex; flex-direction: column; }
.panel { flex: 1; min-height: 0; margin-right: 6px; background: #404040; display: flex; flex-direction: column; padding-bottom: 8px; border-bottom: 1px solid #262626; }
.panel-head { height: 23px; flex: none; background: #4d4d4d; display: flex; align-items: center; gap: 9px; padding: 0 7px 0 5px; }
.panel-head h2 { margin: 0; flex: 1; font-size: 11px; }
.tools { height: 37px; margin-top: 1px; flex: none; display: flex; align-items: center; gap: 13px; padding: 4px 0 0 15px; }
.tools .bar { margin: 0 -5px; }
.explorer { flex: 1; min-height: 0; margin: 0 8px; border: 1px solid #262626; background: #3d3d3d; display: flex; flex-direction: column; padding: 3px 0 5px; }
.search { margin: 0 6px; height: 21px; flex: none; background: #2e2e2e; border: 1px solid #232323; border-radius: 4px; display: flex; align-items: center; gap: 7px; padding-left: 6px; }
.search input { flex: 1; min-width: 0; border: 0; padding: 0; background: none; color: #e6e6e6; font: inherit; outline: 0; }
.search input::placeholder { color: #e6e6e6; opacity: 1; }
.explorer hr { width: auto; margin: 5px 6px 10px; border: 0; height: 1px; background: #2a2a2a; flex: none; }
.scroller { flex: 1; min-height: 0; display: flex; }
.tree { flex: 1; min-width: 0; margin: 0; padding: 0; list-style: none; overflow: hidden; font: 11px/15px "Noto Sans", "Open Sans", sans-serif; }
.tree li { height: 16px; display: flex; align-items: center; }
.tree b { font-weight: 600; }
.root { padding-left: 5px; }
.l1 { padding-left: 5px; }
.l2 { padding-left: 17px; }
.l3 { padding-left: 29px; }
.l4 { padding-left: 41px; }
.tw { width: 12px; height: 9px; flex: none; }
.open .tw::after { content: ""; display: block; margin: 2px 0 0 2px; width: 6px; height: 6px; background: #fff; clip-path: polygon(100% 0, 100% 100%, 0 100%); }
.shut .tw::after { content: ""; display: block; margin: 1px 0 0 4px; width: 4px; height: 8px; background: #fff; clip-path: polygon(0 0, 100% 50%, 0 100%); }
.ic { width: 16px; height: 15px; }
.ic.sm { height: 12px; }
.ic.cam { height: 14px; }
.red { color: #e2694a; }
.green { color: #8fcb8d; }
.cell { flex: 1; min-width: 0; height: 16px; display: flex; padding: 0 36px 0 2px; border-bottom: 1px solid #363636; }
.cell span, .cell b { flex: 1; min-width: 0; overflow: hidden; white-space: nowrap; }
.cell .st { width: 9px; height: 11px; margin: 3px -14px 0 5px; }
.focus { border: 1px solid #6284a8; padding-left: 1px; line-height: 14px; }
.current { background: #4f4f4f; color: #fff; }
.picked { background: #6284a5; color: #fff; }
.bom em { display: inline-block; width: 9px; height: 9px; margin: 0 4px 0 2px; border-radius: 5px; background: #e6e6e6; color: #333; font: bold 8px/9px "Open Sans", sans-serif; text-align: center; vertical-align: 1px; }
.bom small { font-size: 8px; color: #78b4f0; margin-right: 3px; }
.bom { padding-right: 32px; }
.bom a { color: #78b4f0; text-decoration: none; }
.scrollbar { width: 19px; flex: none; display: flex; flex-direction: column; align-items: center; gap: 2px; padding: 5px 5px 4px 0; }
.thumb { width: 7px; flex: 1; margin-bottom: 56px; border-radius: 3px; background: #777; }

.bottom-tabs { height: 22px; flex: none; display: flex; align-items: flex-start; padding-left: 1px; }
.bottom-tabs button { height: 19px; padding: 1px 5px 0; border: 1px solid #262626; border-top: 0; border-radius: 0 0 3px 3px; }
.bottom-tabs .on { background: #4f4f4f; color: #fff; }

.editor { flex: 1; min-width: 0; display: flex; flex-direction: column; }
.doc-tabs { height: 25px; flex: none; display: flex; }
.doc-tabs button { padding: 0 3px; gap: 4px; border: 1px solid #262626; border-bottom: 0; border-radius: 4px 4px 0 0; }
.doc-tabs .on { background: #4f4f4f; color: #fff; }
.canvas { flex: 1; min-height: 0; position: relative; overflow: hidden; background: linear-gradient(165deg, #bebebe, #c6c6c6 40%, #e2e2e2); }
.sheet { width: 100%; height: 100%; }
.sheet path, .sheet .ring { fill: none; shape-rendering: crispEdges; }
.sheet .paper { fill: #fffdf8; }
.sheet path[fill] { fill: url(#grid); }
.sheet .minor { stroke: #eceee9; }
.sheet .major { stroke: #d6d6d2; }
.sheet .frame, .sheet .pin { stroke: #000; }
.sheet .wire { stroke: #000080; }
.sheet .mask { stroke: #e3eaf8; stroke-width: 5; stroke-dasharray: 2 1; }
.sheet .sym { stroke: #0000f0; }
.sheet circle.sym { fill: none; }
.sheet .soft { shape-rendering: auto; }
.sheet .tip { fill: #0000f0; }
.sheet .pw { stroke: #800000; }
.sheet .part { fill: #ffffb0; stroke: #800000; }
.sheet .ring { fill: #fff; stroke: #0000f0; stroke-width: 1.5; shape-rendering: auto; }
.sheet .tri { fill: #ffffb0; stroke: #000; shape-rendering: auto; }
.sheet .warn { stroke: #f06a30; stroke-width: 2; stroke-dasharray: 2 1; }
.sheet .nc { stroke: #f00000; stroke-dasharray: 2 1; }
.dot { fill: #000080; }
.sheet text { font: 7px "Liberation Serif", serif; fill: inherit; stroke: none; }
.sheet .net { fill: #800000; }
.lab, .val { fill: #000080; }
.num, .ink { fill: #222; }
.mid { text-anchor: middle; }
.end { text-anchor: end; }
.sheet .val text { font: 7px "Liberation Sans", sans-serif; }
.sheet .tiny text { font-size: 5px; }

.active-bar { position: absolute; top: 3px; left: 338px; height: 28px; padding: 0 5px 0 4px; display: flex; background: #3e3e3e; border-radius: 4px; }
.active-bar button { width: 28px; justify-content: center; position: relative; }
.active-bar .more::after { content: ""; position: absolute; right: 2px; bottom: 1px; width: 5px; height: 5px; background: #fff; clip-path: polygon(100% 0, 100% 100%, 0 100%); }
.active-bar .ruled { border-right: 1px solid #262626; }
.active-bar .letter { font: bold 20px/24px "Liberation Serif", serif; color: #5f9fe6; }
.port { font: bold 7px "Open Sans", sans-serif; fill: #5f4714; }

.dock { width: 25px; flex: none; margin: 0 2px 2px 3px; background: #404040; display: flex; flex-direction: column; align-items: center; gap: 2px; padding-top: 1px; }
.dock button { width: 20px; padding: 3px 0 4px; justify-content: center; writing-mode: vertical-rl; background: #4f4f4f; border: 1px solid #262626; border-radius: 3px; }

.status { height: 26px; flex: none; display: flex; align-items: center; background: #404040; padding: 0 3px 0 5px; }
.status .boxed { padding: 0 4px; }
.cells { width: 348px; height: 16px; display: flex; gap: 9px; border-right: 1px solid #303030; }
.cells:first-child { width: 344px; }
.rest { flex: 1; border: 0; }
```
